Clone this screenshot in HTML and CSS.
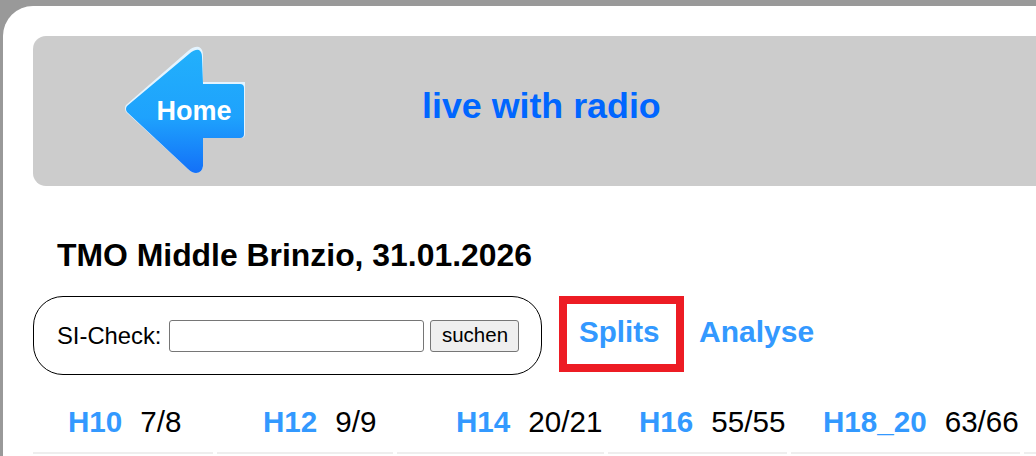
FILE: index.html
```html
<!DOCTYPE html>
<html>
<head>
	<meta charset="UTF-8">
	<title>TMO Middle Brinzio</title>
	<link rel="stylesheet" href="styles.css">
</head>
<body>
<div class="page">

	<div class="head">
		<a class="home" href="#">
			<svg width="122" height="130" viewBox="0 0 122 130">
				<defs>
					<linearGradient id="arrowFill" x1="0" y1="0" x2="0" y2="1">
						<stop offset="0" stop-color="#22b0fb"/>
						<stop offset="0.55" stop-color="#1ea2fd"/>
						<stop offset="1" stop-color="#1370f8"/>
					</linearGradient>
				</defs>
				<path class="arrow_edge" d="M2 59 L64 5 Q70 0 75 1 Q79 3 79 9 L79 36 L121 36 L121 88 Q121 92 117 92 L79 92 L79 120 Q78 127 72 127 Q68 127 64 123 L2 66 Q0 62 2 59 Z"/>
				<path class="arrow_body" d="M3 60 L65 8 Q71 3 75 4 Q78 6 78 11 L79 38 L116 38 Q120 38 120 42 L120 88 Q120 92 116 92 L79 92 L79 120 Q78 127 72 127 Q68 127 64 123 L3 66 Q1 63 3 60 Z"/>
				<text class="arrow_text" x="70" y="74" text-anchor="middle">Home</text>
			</svg>
		</a>
		<a class="radio" href="#">live with radio</a>
	</div>

	<h1 class="title">TMO Middle Brinzio, 31.01.2026</h1>

	<div class="tools">
		<form class="check">
			<label for="si">SI-Check:</label>
			<input id="si" class="check_input" type="text">
			<button class="check_btn" type="button">suchen</button>
		</form>
		<a class="tool tool_on" href="#">Splits</a>
		<a class="tool" href="#">Analyse</a>
	</div>

	<div class="classes">
		<div class="cls cls_a"><a href="#">H10</a><span>7/8</span></div>
		<div class="cls cls_b"><a href="#">H12</a><span>9/9</span></div>
		<div class="cls cls_c"><a href="#">H14</a><span>20/21</span></div>
		<div class="cls cls_d"><a href="#">H16</a><span>55/55</span></div>
		<div class="cls cls_e"><a href="#">H18_20</a><span>63/66</span></div>
		<div class="cls cls_f"></div>
	</div>

</div>
</body>
</html>
```

FILE: styles.css
```css
html, body {
	height: 100%;
	overflow: hidden;
}

body {
	margin: 0;
	padding: 6px 0 0 3px;
	box-sizing: border-box;
	background: #999999;
	font-family: "Liberation Sans", Arial, sans-serif;
	color: black;
}

a {
	color: #3399ff;
	font-weight: bold;
	text-decoration: none;
}

.page {
	margin-right: -40px;
	height: 600px;
	padding: 30px 0 0 30px;
	background: white;
	border-radius: 30px 0 0 0;
}

.head {
	display: flex;
	align-items: center;
	height: 150px;
	background: #CCCCCC;
	border-radius: 13px 0 0 13px;
}

.home {
	display: block;
	width: 122px;
	height: 130px;
	margin-left: 91px;
}

.arrow_edge {
	fill: #e4f4ff;
}

.arrow_body {
	fill: url(#arrowFill);
}

.arrow_text {
	font-size: 27px;
	font-weight: bold;
	fill: white;
}

.radio {
	margin-left: 176px;
	margin-top: -10px;
	font-size: 35.8px;
	color: #0066ff;
}

.title {
	margin: 51px 0 0 24px;
	font-size: 31.9px;
	line-height: 36px;
}

.tools {
	display: flex;
	align-items: flex-start;
	margin-top: 23px;
}

.check {
	display: flex;
	align-items: center;
	box-sizing: border-box;
	width: 509px;
	height: 79px;
	padding-left: 23px;
	border: 1px solid black;
	border-radius: 30px;
	font-size: 23.8px;
}

.check_input {
	box-sizing: border-box;
	width: 255px;
	height: 32px;
	margin: 0 6px 0 8px;
	padding: 0;
	background: white;
	border: 1px solid #767676;
	border-radius: 3px;
}

.check_btn {
	box-sizing: border-box;
	width: 89px;
	height: 32px;
	padding: 0 0 2px;
	background: #EFEFEF;
	border: 1px solid #767676;
	border-radius: 3px;
	font-family: inherit;
	font-size: 20.5px;
	color: black;
}

.tool {
	font-size: 30px;
	line-height: 71px;
	margin-left: 15px;
}

.tool_on {
	box-sizing: border-box;
	width: 125px;
	height: 76px;
	margin-left: 17px;
	padding-left: 12px;
	border: 8px solid #ED1C24;
	font-size: 29.6px;
	line-height: 56px;
}

.classes {
	display: flex;
	gap: 4px;
	margin-top: 21px;
}

.cls {
	flex: none;
	display: flex;
	gap: 18px;
	height: 58px;
	padding-top: 5px;
	box-sizing: border-box;
	border-bottom: 2px solid #EEEEEE;
	font-size: 29.6px;
	line-height: 42px;
}

.cls_a { width: 180px; padding-left: 35px; }
.cls_b { width: 176px; padding-left: 46px; }
.cls_c { width: 207px; padding-left: 59px; }
.cls_d { width: 179px; padding-left: 31px; }
.cls_e { width: 229px; padding-left: 32px; }
.cls_f { width: 100px; }
```
